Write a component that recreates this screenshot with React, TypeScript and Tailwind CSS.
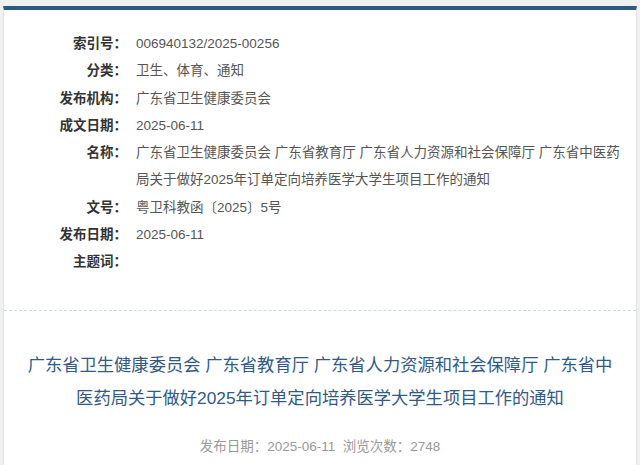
const rows: { label: string; value: string }[] = [
  { label: "索引号", value: "006940132/2025-00256" },
  { label: "分类", value: "卫生、体育、通知" },
  { label: "发布机构", value: "广东省卫生健康委员会" },
  { label: "成文日期", value: "2025-06-11" },
  {
    label: "名称",
    value:
      "广东省卫生健康委员会 广东省教育厅 广东省人力资源和社会保障厅 广东省中医药局关于做好2025年订单定向培养医学大学生项目工作的通知",
  },
  { label: "文号", value: "粤卫科教函〔2025〕5号" },
  { label: "发布日期", value: "2025-06-11" },
  { label: "主题词", value: "" },
];

export default function App() {
  return (
    <div
      className="min-h-screen bg-[#f1f1f1] pt-[6px] px-[3px]"
      style={{ fontFamily: '"Liberation Sans", "Noto Sans CJK SC", sans-serif' }}
    >
      <div className="bg-white border-t-[4px] border-t-[#2d5a84] border-x border-x-[#e3e3e3] min-h-[460px]">
        {/* meta info */}
        <div className="pt-[20px] pb-[35px]">
          {rows.map((r) => (
            <div key={r.label} className="flex text-[13.5px] leading-[27.25px]">
              <div className="w-[123px] shrink-0 text-right font-bold text-[#333]">{r.label}：</div>
              <div className="ml-[9px] w-[490px] text-[#555]">{r.value}</div>
            </div>
          ))}
        </div>

        {/* title */}
        <div className="border-t border-dashed border-t-[#c9dcd8] px-[18px] pt-[38px] pb-[20px] text-center">
          <h1 className="text-[17.3px] leading-[33px] text-[#31598a] font-normal">
            广东省卫生健康委员会 广东省教育厅 广东省人力资源和社会保障厅 广东省中医药局关于做好2025年订单定向培养医学大学生项目工作的通知
          </h1>
          <div className="mt-[22px] text-[13.5px] leading-[20px] text-[#999]">
            发布日期：2025-06-11&nbsp;&nbsp;浏览次数：2748
          </div>
        </div>
      </div>
    </div>
  );
}
